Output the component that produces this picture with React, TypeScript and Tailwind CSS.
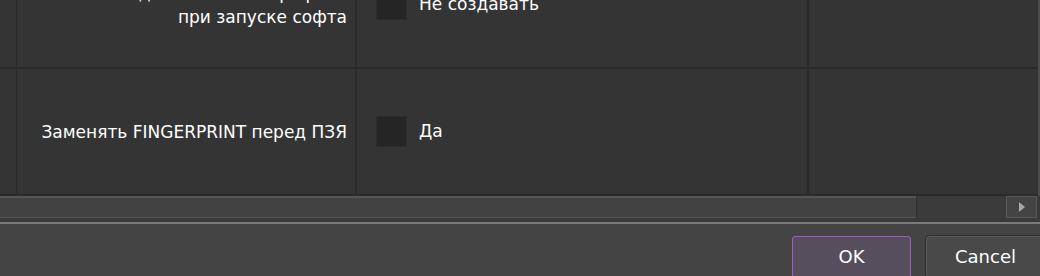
import React from "react";

function Checkbox() {
  return <div className="w-[31px] h-[31px] shrink-0 bg-[#252525] border border-[#2c2c2c]" />;
}

function Row({ label, value }: { label: React.ReactNode; value: string }) {
  return (
    <div className="flex h-[127px] border-b-2 border-[#2a2a2a]">
      <div className="w-[17px] shrink-0 border-r border-[#2a2a2a]" />
      <div className="w-[340px] shrink-0 flex items-center justify-end pr-[8px] text-right leading-[24px] border-r-2 border-[#2a2a2a]">
        {label}
      </div>
      <div className="w-[452px] shrink-0 flex items-center gap-[12px] pl-[19px] border-r-2 border-[#2a2a2a]">
        <Checkbox />
        <span>{value}</span>
      </div>
      <div className="flex-1" />
    </div>
  );
}

export default function App() {
  return (
    <div
      className="w-[1040px] h-[276px] bg-[#444444] overflow-hidden flex flex-col text-white text-[17px]"
      style={{ fontFamily: '"DejaVu Sans", sans-serif' }}
    >
      <div className="h-[196px] shrink-0 overflow-hidden bg-[#343434] border-r-2 border-[#4c4c4c]">
        <div className="-mt-[58px]">
          <Row
            label={
              <div className="whitespace-nowrap">
                Создавать новый профиль
                <br />
                при запуске софта
              </div>
            }
            value="Не создавать"
          />
          <Row label={<div className="whitespace-nowrap">Заменять FINGERPRINT перед ПЗЯ</div>} value="Да" />
        </div>
      </div>
      <div className="h-[23px] shrink-0 flex bg-[#393939]">
        <div className="w-[916px] h-[22px] bg-[#424242] border-t-2 border-b border-[#555555]" />
        <div className="flex-1 h-[22px] bg-[#3b3b3b] border-l border-[#2c2c2c] border-t-2 border-t-[#3a3a3a]" />
        <div className="w-[31px] h-[22px] bg-[#444444] border border-[#585858] flex items-center justify-center">
          <svg width="8" height="12" viewBox="0 0 8 12">
            <path d="M1 1 L7 6 L1 11 Z" fill="#a8a8a8" />
          </svg>
        </div>
        <div className="w-[3px]" />
      </div>
      <div className="h-[3px] shrink-0 bg-[#393939]" />
      <div className="h-[2px] shrink-0 bg-[#7a7a7a]" />
      <div className="flex-1 flex justify-start">
        <div className="w-[1045px] shrink-0 flex justify-end gap-[15px] pt-[12px]">
          <button className="w-[119px] h-[42px] rounded-[3px] border border-[#9a62c4] bg-[#564e5d] text-white text-[18px] leading-none">
            OK
          </button>
          <button className="w-[119px] h-[42px] rounded-[3px] border border-[#5c5c5c] bg-[#494949] text-white text-[18px] leading-none outline outline-1 outline-[#2e2e2e]">
            Cancel
          </button>
        </div>
      </div>
    </div>
  );
}
